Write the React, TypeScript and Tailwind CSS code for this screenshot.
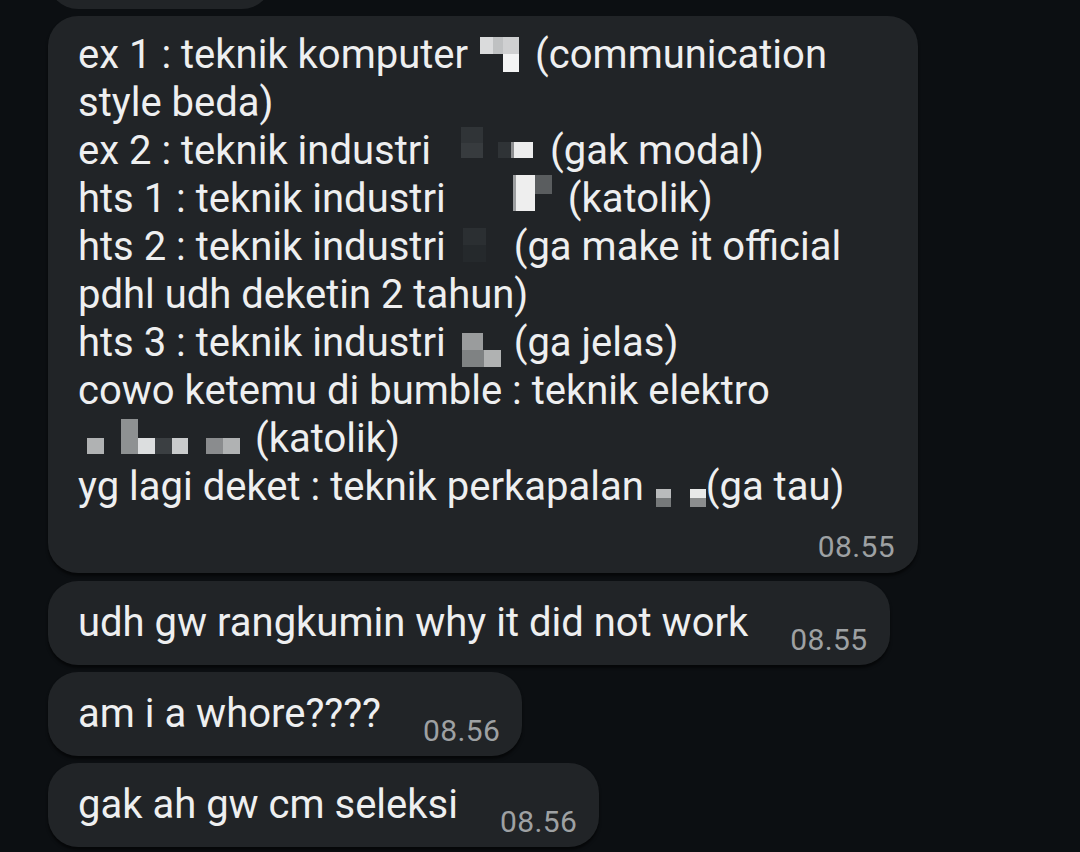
import type { ReactNode } from 'react'

type Block = { x: number; y: number; w: number; h: number; c: string }

// pixelated censor patch, drawn as small rects
function Censor({ width, blocks }: { width: number; blocks: Block[] }) {
  return (
    <svg width={width} height={48} viewBox={`0 0 ${width} 48`} className="block shrink-0 overflow-visible">
      {blocks.map((b, i) => (
        <rect key={i} x={b.x} y={b.y} width={b.w} height={b.h} fill={b.c} />
      ))}
    </svg>
  )
}

function Line({ children }: { children: ReactNode }) {
  return <div className="flex h-[48px] items-start whitespace-pre">{children}</div>
}

function Time({ t }: { t: string }) {
  return <span className="text-[30px] leading-[32px] tracking-[0.4px] text-[#9ea1a3]">{t}</span>
}

const c1: Block[] = [
  { x: 12, y: 6, w: 13, h: 17, c: '#dadbdc' },
  { x: 25, y: 6, w: 10, h: 17, c: '#bfc1c2' },
  { x: 35, y: 6, w: 16, h: 17, c: '#cfd0d1' },
  { x: 35, y: 23, w: 16, h: 18, c: '#f3f4f4' },
]
const c3: Block[] = [
  { x: 30, y: 0, w: 22, h: 16, c: '#303437' },
  { x: 30, y: 16, w: 22, h: 15, c: '#373b3e' },
  { x: 67, y: 15, w: 13, h: 16, c: '#2f3336' },
  { x: 80, y: 15, w: 3, h: 16, c: '#8d8f91' },
  { x: 83, y: 15, w: 19, h: 16, c: '#eceded' },
]
const c4: Block[] = [
  { x: 67, y: 0, w: 3, h: 36, c: '#9c9ea0' },
  { x: 70, y: 0, w: 19, h: 36, c: '#eeeeee' },
  { x: 89, y: 0, w: 17, h: 19, c: '#5a5d5f' },
]
const c5: Block[] = [
  { x: 17, y: 5, w: 23, h: 17, c: '#2b2f32' },
  { x: 17, y: 22, w: 23, h: 17, c: '#25292c' },
]
const c7: Block[] = [
  { x: 16, y: 14, w: 21, h: 17, c: '#9a9c9d' },
  { x: 16, y: 31, w: 22, h: 17, c: '#7f8283' },
  { x: 38, y: 31, w: 17, h: 17, c: '#b0b2b2' },
]
const c9: Block[] = [
  { x: 9, y: 23, w: 17, h: 16, c: '#b0b2b3' },
  { x: 43, y: 4, w: 17, h: 35, c: '#8e9192' },
  { x: 60, y: 23, w: 17, h: 16, c: '#dcdedf' },
  { x: 77, y: 23, w: 17, h: 16, c: '#3b3f42' },
  { x: 94, y: 23, w: 16, h: 16, c: '#c9cbcc' },
  { x: 128, y: 23, w: 17, h: 16, c: '#8a8c8e' },
  { x: 145, y: 23, w: 17, h: 16, c: '#b0b2b3' },
]
const c10: Block[] = [
  { x: 12, y: 26, w: 15, h: 9, c: '#b9bbbc' },
  { x: 12, y: 35, w: 15, h: 9, c: '#76797a' },
  { x: 46, y: 26, w: 16, h: 9, c: '#e8e9e9' },
  { x: 46, y: 35, w: 16, h: 9, c: '#8b8d8e' },
]

function Short({ text, time }: { text: string; time: string }) {
  return (
    <div className="flex h-[84px] w-fit items-start rounded-[30px] bg-[#212427] pl-[30px] pr-[22px] shadow-[0_3px_3px_rgba(0,0,0,0.55)]">
      <span className="pt-[18px] text-[40px] leading-[48px]">{text}</span>
      <span className="ml-[42px] mt-[43px]">
        <Time t={time} />
      </span>
    </div>
  )
}

export default function App() {
  return (
    <div className="min-h-[852px] w-full overflow-hidden bg-[#0c0f12] font-['Roboto',sans-serif] text-[#eeeff0]">
      <div className="flex flex-col gap-[7px] pl-[48px]">
        <div className="flex h-[9px] items-end overflow-hidden">
          <div className="h-[60px] w-[224px] shrink-0 rounded-[30px] bg-[#212427]" />
        </div>

        <div className="flex h-[557px] w-[870px] flex-col rounded-[30px] bg-[#212427] pl-[30px] pr-[23px] pt-[15px] shadow-[0_3px_3px_rgba(0,0,0,0.55)]">
          <div className="text-[40px] leading-[48px]">
            <Line>
              <span>ex 1 : teknik komputer</span>
              <Censor width={67} blocks={c1} />
              <span>(communication</span>
            </Line>
            <Line>style beda)</Line>
            <Line>
              <span>ex 2 : teknik industri</span>
              <Censor width={119} blocks={c3} />
              <span>(gak modal)</span>
            </Line>
            <Line>
              <span>hts 1 : teknik industri</span>
              <Censor width={122} blocks={c4} />
              <span>(katolik)</span>
            </Line>
            <Line>
              <span>hts 2 : teknik industri</span>
              <Censor width={68} blocks={c5} />
              <span>(ga make it official</span>
            </Line>
            <Line>pdhl udh deketin 2 tahun)</Line>
            <Line>
              <span>hts 3 : teknik industri</span>
              <Censor width={68} blocks={c7} />
              <span>(ga jelas)</span>
            </Line>
            <Line>cowo ketemu di bumble : teknik elektro</Line>
            <Line>
              <Censor width={177} blocks={c9} />
              <span>(katolik)</span>
            </Line>
            <Line>
              <span>yg lagi deket : teknik perkapalan</span>
              <Censor width={62} blocks={c10} />
              <span>(ga tau)</span>
            </Line>
          </div>
          <div className="mt-[20px] flex justify-end">
            <Time t="08.55" />
          </div>
        </div>

        <div className="mt-px">
          <Short text="udh gw rangkumin why it did not work" time="08.55" />
        </div>
        <Short text="am i a whore????" time="08.56" />
        <Short text="gak ah gw cm seleksi" time="08.56" />
      </div>
    </div>
  )
}
